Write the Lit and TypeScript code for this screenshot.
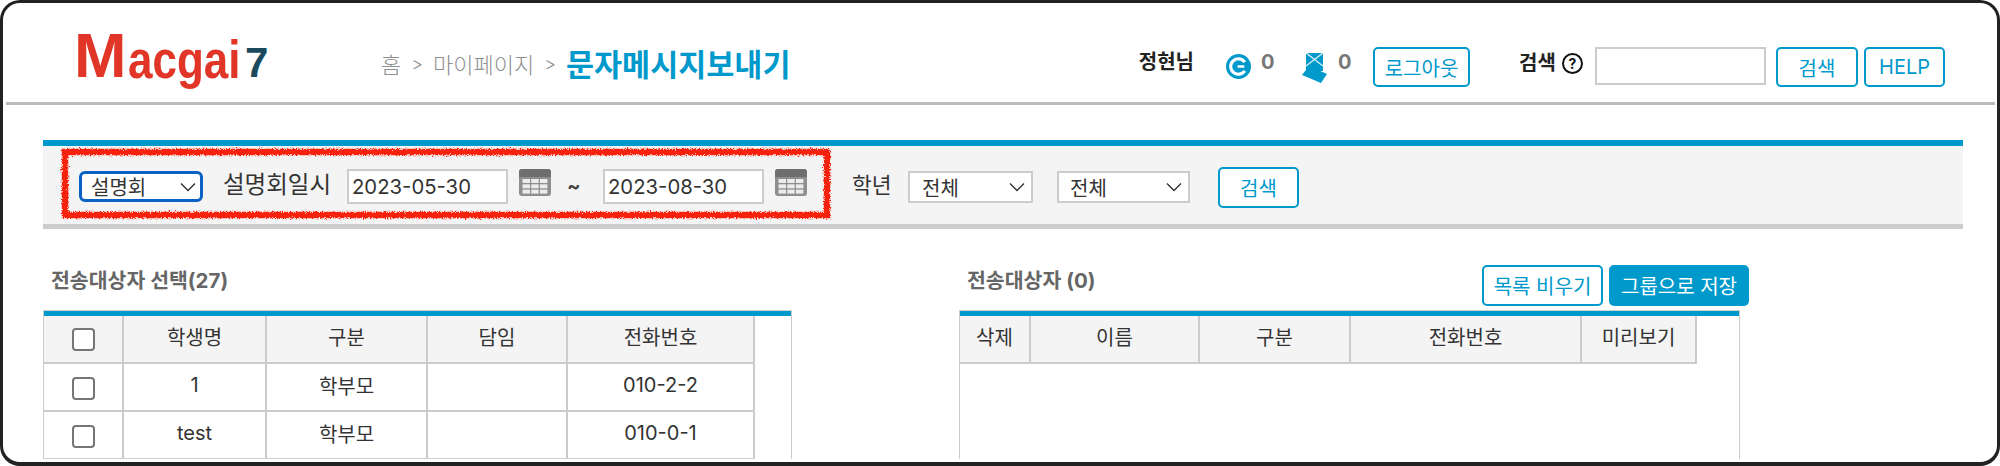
import { LitElement, html, css, svg } from "lit";
import { customElement } from "lit/decorators.js";

const calendar = html`<svg class="cal" viewBox="0 0 32 27" width="32" height="27">
  <rect width="32" height="27" rx="3" fill="#8e8e8e"/>
  <path d="M0 8V3a3 3 0 0 1 3-3h26a3 3 0 0 1 3 3v5z" fill="#6e6e6e"/>
  ${[0, 1, 2].map((c) => [0, 1, 2].map((r) => svg`<rect x="${3.5 + c * 8.7}" y="${10 + r * 5.3}" width="7.5" height="4" fill="#ececec"/>`))}
</svg>`;

const chev = html`<svg width="16" height="10" viewBox="0 0 16 10"><path d="M1 1.5 8 8.5l7-7" fill="none" stroke="#333" stroke-width="1.4"/></svg>`;

@customElement("app-root")
export class AppRoot extends LitElement {
  static styles = css`
    :host { display: block; width: 2000px; height: 466px; background: #fff; font-family: Inter, "Noto Sans CJK KR", sans-serif; }
    .frame { box-sizing: border-box; width: 2000px; height: 466px; border: 3px solid #222; border-bottom-width: 4px; border-radius: 20px; background: #fff; overflow: hidden; color: #333; display: flex; flex-direction: column; }
    .head { height: 102px; box-sizing: border-box; border-bottom: 3px solid #bbb; margin: 0 2px 0 3px; display: flex; align-items: flex-start; flex: none; }
    .logo { margin: 30px 0 0 68px; width: 307px; height: 45px; display: flex; align-items: flex-end; font-family: "Liberation Sans", sans-serif; font-weight: 700; color: #e13527; flex: none; line-height: 1; }
    .logo span { display: block; transform-origin: 0 100%; white-space: nowrap; }
    .logo .m { font-size: 63px; line-height: 45px; width: 54px; }
    .logo .r { font-size: 44px; line-height: 30px; transform: scaleY(1.2); width: 117px; }
    .logo .n { font-size: 42px; line-height: 30px; color: #1b4a5e; }
    .crumb { margin-top: 40px; height: 40px; display: flex; align-items: center; font-size: 22px; font-weight: 300; color: #8f8f8f; gap: 10px; flex: none; }
    .crumb b { font-size: 30.5px; color: #0099cc; font-weight: 700; }
    .crumb i { font-style: normal; font-size: 18px; }
    .user { margin: 44px 50px 0 auto; display: flex; align-items: flex-start; height: 40px; font-size: 20px; }
    .name { font-weight: 700; color: #222; line-height: 30px; white-space: nowrap; }
    .ic1 { margin: 7px 0 0 32px; flex: none; }
    .ic2 { margin: 6px 0 0 30px; flex: none; }
    .cnt { font-size: 20px; font-weight: 700; color: #777; line-height: 30px; width: 11px; }
    .c1 { margin-left: 10px; }
    .c2 { margin-left: 11px; }
    .btn { box-sizing: border-box; border: 2px solid #0099cc; border-radius: 5px; background: #fff; color: #0099cc; font-family: inherit; font-size: 20px; font-weight: 400; display: inline-flex; align-items: center; justify-content: center; padding: 0; flex: none; white-space: nowrap; }
    .logout { width: 97px; height: 40px; margin-left: 24px; }
    .sl { font-weight: 700; color: #222; margin-left: 49px; line-height: 32px; width: 37px; white-space: nowrap; }
    .q { margin: 6px 0 0 6px; width: 21px; height: 21px; border: 2px solid #111; border-radius: 50%; box-sizing: border-box; font-size: 14px; font-weight: 700; color: #111; display: inline-flex; align-items: center; justify-content: center; flex: none; }
    .sinp { box-sizing: border-box; border: 2px solid #ccc; background: #fff; width: 171px; height: 38px; margin-left: 12px; flex: none; }
    .sb { width: 82px; height: 40px; margin-left: 10px; }
    .hb { width: 81px; height: 40px; margin-left: 6px; }

    .bar { margin: 35px 0 0 40px; width: 1920px; height: 89px; box-sizing: border-box; background: #f4f4f4; border-top: 6px solid #0099cc; border-bottom: 5px solid #ccc; display: flex; align-items: flex-start; flex: none; position: relative; padding-left: 36px; }
    .sel { box-sizing: border-box; display: inline-flex; align-items: center; justify-content: space-between; background: #fff; color: #333; font-size: 20px; flex: none; }
    .sel.focus { width: 124px; height: 31px; border: 3px solid #0b62c4; border-radius: 6px; padding: 0 4px 0 9px; margin-top: 25px; }
    .label { margin: 24px 0 0 20px; width: 108px; line-height: 30px; font-size: 23.5px; color: #333; white-space: nowrap; flex: none; }
    .date { box-sizing: border-box; width: 161px; height: 35px; background: #fff; border: 2px solid #ccc; display: flex; align-items: center; padding-left: 3px; font-size: 20.3px; color: #333; margin-top: 23px; flex: none; }
    .d1 { margin-left: 16px; }
    .d2 { margin-left: 23px; }
    .cal { margin: 23px 0 0 11px; flex: none; }
    .til { margin: 25px 0 0 16px; width: 13px; line-height: 30px; font-size: 20px; font-weight: 700; color: #444; flex: none; }
    .hak { margin: 24px 0 0 45px; width: 41px; line-height: 30px; font-size: 21.5px; white-space: nowrap; flex: none; }
    .sel.s { height: 32px; border: 2px solid #ccc; margin-top: 25px; }
    .s1 { width: 125px; padding: 0 6px 0 12px; margin-left: 15px; }
    .s2 { width: 133px; padding: 0 6px 0 11px; margin-left: 24px; }
    .fb { width: 81px; height: 41px; margin: 21px 0 0 28px; }
    .mark { position: absolute; left: 19px; top: 3px; overflow: visible; pointer-events: none; }

    .cols { display: flex; flex: 1; min-height: 0; margin: 36px 0 0 40px; }
    .col { display: flex; flex-direction: column; flex: none; }
    .left { width: 749px; margin-right: 167px; }
    .right { width: 790px; }
    .top { display: flex; align-items: flex-start; justify-content: space-between; height: 45px; flex: none; }
    .t { font-size: 20.5px; font-weight: 700; color: #666; line-height: 32px; padding-left: 8px; white-space: nowrap; }
    .left .t { padding-left: 8px; }
    .acts { display: flex; gap: 6px; }
    .clear { width: 121px; height: 41px; }
    .save { width: 140px; height: 41px; background: #0099cc; color: #fff; }
    .wrap { box-sizing: border-box; height: 149px; border-top: 1px solid #d2d2d2; border-left: 1px solid #ccc; border-right: 1px solid #ccc; overflow: hidden; flex: none; }
    .lw { width: 749px; }
    .rw { width: 781px; }
    .blue { height: 5px; background: #0099cc; }
    table { border-collapse: separate; border-spacing: 0; table-layout: fixed; font-size: 20px; color: #333; }
    th, td { box-sizing: border-box; height: 48px; border-right: 2px solid #ccc; border-bottom: 2px solid #ccc; text-align: center; font-weight: 400; }
    th { background: #f4f4f4; padding: 0 0 6px; }
    td { background: #fff; padding: 0 0 4px; }
    .cb { display: inline-block; width: 23px; height: 23px; border: 2px solid #767676; border-radius: 4px; box-sizing: border-box; background: #fff; vertical-align: middle; margin-bottom: -3px; }
  `;

  render() {
    const box = html`<span class="cb"></span>`;
    return html`<div class="frame">
      <div class="head">
        <div class="logo"><span class="m">M</span><span class="r">acgai</span><span class="n">7</span></div>
        <div class="crumb"><span>홈</span><i>&gt;</i><span>마이페이지</span><i>&gt;</i><b>문자메시지보내기</b></div>
        <div class="user">
          <span class="name">정현님</span>
          <svg class="ic1" width="25" height="25" viewBox="0 0 26 26"><circle cx="13" cy="13" r="13" fill="#0099cc"/><path d="M19.5 8.5A8 8 0 1 0 19.5 17.5" fill="none" stroke="#fff" stroke-width="3.2"/><path d="M12 13h7" stroke="#fff" stroke-width="2.6"/></svg>
          <span class="cnt c1">0</span>
          <svg class="ic2" width="25" height="30" viewBox="0 0 25 30"><path d="M4 0h17v18H4z" fill="#0099cc"/><path d="M4 0l17 13M21 0 4 13" stroke="#cdeaf5" stroke-width="1.5"/><path d="M7 13l18 8-6 9L0 22z" fill="#0099cc"/></svg>
          <span class="cnt c2">0</span>
          <button class="btn logout">로그아웃</button>
          <span class="sl">검색</span><span class="q">?</span>
          <div class="sinp"></div>
          <button class="btn sb">검색</button>
          <button class="btn hb">HELP</button>
        </div>
      </div>
      <div class="bar">
        <div class="sel focus"><span>설명회</span>${chev}</div>
        <span class="label">설명회일시</span>
        <div class="date d1">2023-05-30</div>${calendar}
        <span class="til">~</span>
        <div class="date d2">2023-08-30</div>${calendar}
        <span class="hak">학년</span>
        <div class="sel s s1"><span>전체</span>${chev}</div>
        <div class="sel s s2"><span>전체</span>${chev}</div>
        <button class="btn fb">검색</button>
        <svg class="mark" width="768" height="69" viewBox="0 0 768 69">
          <defs><filter id="rough" x="-2%" y="-10%" width="104%" height="120%"><feTurbulence type="fractalNoise" baseFrequency="0.7" numOctaves="2" seed="3"/><feDisplacementMap in="SourceGraphic" scale="5"/></filter></defs>
          <rect x="3" y="3" width="762" height="63" fill="none" stroke="#f6230d" stroke-width="6.5" filter="url(#rough)"/>
        </svg>
      </div>
      <div class="cols">
        <div class="col left">
          <div class="top"><div class="t">전송대상자 선택(27)</div></div>
          <div class="wrap lw"><div class="blue"></div><table width="711">
            <colgroup><col width="80"><col width="143"><col width="161"><col width="140"><col width="187"></colgroup>
            <tr><th>${box}</th><th>학생명</th><th>구분</th><th>담임</th><th>전화번호</th></tr>
            <tr><td>${box}</td><td>1</td><td>학부모</td><td></td><td>010-2-2</td></tr>
            <tr><td>${box}</td><td>test</td><td>학부모</td><td></td><td>010-0-1</td></tr>
          </table></div>
        </div>
        <div class="col right">
          <div class="top">
            <div class="t">전송대상자 (0)</div>
            <div class="acts">
              <button class="btn clear">목록 비우기</button>
              <button class="btn save">그룹으로 저장</button>
            </div>
          </div>
          <div class="wrap rw"><div class="blue"></div><table width="737">
            <colgroup><col width="71"><col width="169"><col width="151"><col width="231"><col width="115"></colgroup>
            <tr><th>삭제</th><th>이름</th><th>구분</th><th>전화번호</th><th>미리보기</th></tr>
          </table></div>
        </div>
      </div>
    </div>`;
  }
}
